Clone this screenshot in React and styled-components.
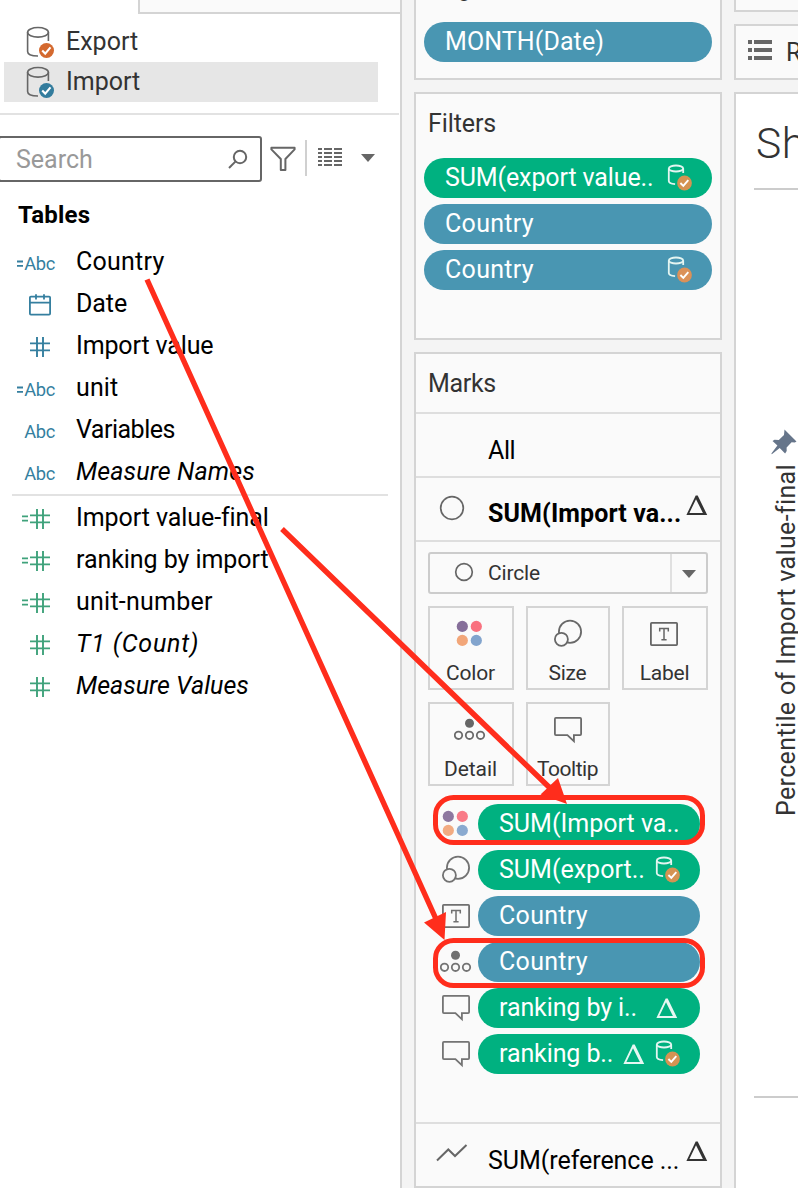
import React from 'react';
import styled, { createGlobalStyle } from 'styled-components';

const GlobalStyle = createGlobalStyle`
  * { box-sizing: border-box; }
  body { margin: 0; background: #fff; font-family: Roboto, "Liberation Sans", sans-serif; }
  svg { display: block; flex: none; }
`;

const Page = styled.div`
  position: relative;
  display: flex;
  width: 798px;
  height: 1188px;
  overflow: hidden;
  background: #f4f4f4;
  color: #333;
  font-size: 25px;
`;

const Txt = styled.span`
  display: block;
  padding-top: ${p => p.$drop || 0}px;
  padding-bottom: ${p => p.$lift || 0}px;
  white-space: pre;
  line-height: 40px;
  letter-spacing: ${p => p.$ls || 0}px;
`;

/* ---------- data pane ---------- */
const DataPane = styled.aside`
  width: 402px;
  flex: none;
  background: #fff;
  border-right: 2px solid #d4d4d4;
`;
const TabEdge = styled.div`
  height: 14px;
  margin-left: 138px;
  background: #fafafa;
  border-left: 2px solid #d4d4d4;
  border-bottom: 2px solid #d4d4d4;
`;
const Sources = styled.div`
  padding: 8px 22px 11px 4px;
`;
const Source = styled.div`
  display: flex;
  align-items: center;
  gap: 12px;
  height: 40px;
  padding-left: 22px;
  background: ${p => (p.$active ? '#e6e6e6' : 'transparent')};
`;
const Rule = styled.div`
  height: 2px;
  margin: 0 ${p => p.$right || 0}px ${p => p.$bottom || 0}px ${p => p.$left || 0}px;
  background: #e2e2e2;
`;
const SearchRow = styled.div`
  display: flex;
  align-items: center;
  height: 46px;
  margin-top: 21px;
`;
const SearchBox = styled.div`
  display: flex;
  align-items: center;
  justify-content: space-between;
  width: 264px;
  height: 46px;
  margin-left: -2px;
  padding: 0 12px 0 16px;
  border: 2px solid #666;
  border-radius: 3px;
  color: #999;
`;
const Tools = styled.div`
  display: flex;
  align-items: center;
  padding-left: 8px;
  height: 42px;
  margin-top: -2px;
`;
const FunnelSlot = styled.div`
  padding-top: 2px;
`;
const ColumnsSlot = styled.div`
  padding-bottom: 2px;
`;
const Divider = styled.div`
  width: 2px;
  height: 36px;
  margin: 0 11px 0 9px;
  background: #d0d0d0;
`;
const CaretSlot = styled.div`
  padding: 0 0 1px 19px;
`;
const Heading = styled.h2`
  margin: 13px 0 7px 18px;
  font-size: 24px;
  line-height: 40px;
  font-weight: 700;
  color: #000;
  letter-spacing: 0.2px;
`;
const Field = styled.div`
  display: flex;
  align-items: center;
  height: 42px;
  color: #000;
  font-style: ${p => (p.$italic ? 'italic' : 'normal')};
`;
const FieldIcon = styled.div`
  width: 56px;
  margin-right: 20px;
  padding-right: ${p => (p.$text ? 1 : 4)}px;
  padding-top: ${p => (p.$text ? 2 : 0)}px;
  display: flex;
  justify-content: flex-end;
  align-items: center;
  color: ${p => (p.$measure ? '#3fa27b' : '#357f9f')};
`;
const Abc = styled.span`
  margin-left: 1px;
  font-size: 18.3px;
  font-style: normal;
  line-height: 24px;
  letter-spacing: -0.35px;
`;

/* ---------- shelves ---------- */
const Shelves = styled.section`
  display: flex;
  flex-direction: column;
  gap: 12px;
  width: 308px;
  margin-left: 12px;
  flex: none;
`;
const Card = styled.div`
  height: ${p => p.$h}px;
  flex: none;
  background: #fafafa;
  border: 2px solid #d4d4d4;
  border-top-width: ${p => (p.$open ? 0 : 2)}px;
`;
const CardTitle = styled.div`
  height: ${p => p.$h}px;
  padding: 10px 12px 0;
`;
const CutTitle = styled.div`
  height: 22px;
  padding-left: 12px;
  overflow: hidden;
`;
const CutText = styled.div`
  margin-top: -27px;
  line-height: 30px;
`;
const Pills = styled.div`
  display: flex;
  flex-direction: column;
  gap: 6px;
  padding: 0 8px;
`;
const Pill = styled.div`
  display: flex;
  align-items: center;
  flex: 1;
  height: 40px;
  min-height: 40px;
  padding: 0 ${p => p.$pr || 19}px 0 21px;
  border-radius: 20px;
  background: ${p => (p.$green ? '#00b180' : '#4996b2')};
  color: #fff;
`;
const PillIcons = styled.div`
  display: flex;
  align-items: center;
  gap: 10px;
  margin-left: auto;
`;
const Layer = styled.div`
  display: flex;
  height: 64px;
  border-top: 2px solid #dedede;
  color: #000;
  font-weight: ${p => (p.$bold ? 700 : 400)};
`;
const LayerIcon = styled.div`
  width: 72px;
  padding: ${p => p.$top || 17}px 0 0 ${p => p.$left || 23}px;
  flex: none;
`;
const LayerName = styled.div`
  width: 198px;
  padding-top: 16px;
  flex: none;
  white-space: nowrap;
`;
const LayerMark = styled.div`
  padding-top: 17px;
`;
const Encodings = styled.div`
  height: 582px;
  border-top: 2px solid #dedede;
  padding: 10px 12px 0;
`;
const Select = styled.div`
  display: flex;
  align-items: center;
  gap: 14px;
  height: 42px;
  border: 2px solid #ccc;
  border-radius: 3px;
  padding-left: 24px;
  font-size: 21px;
`;
const SelectIcon = styled.div`
  padding-bottom: 2px;
`;
const SelectArrow = styled.div`
  display: flex;
  align-items: center;
  justify-content: center;
  width: 36px;
  height: 38px;
  padding-top: 2px;
  margin-left: auto;
  border-left: 2px solid #e0e0e0;
`;
const Buttons = styled.div`
  display: grid;
  grid-template-columns: 86px 84px 86px;
  grid-auto-rows: 84px;
  gap: 12px;
  margin-top: 12px;
`;
const MarkButton = styled.div`
  display: flex;
  flex-direction: column;
  align-items: center;
  border: 2px solid #d4d4d4;
  padding-top: 10px;
  font-size: 21px;
  color: #333;
  &:not(:nth-child(3n + 2)) > svg { transform: translateX(-1px); }
`;
const ButtonLabel = styled.span`
  margin: 10px 1px 0 0;
  line-height: 30px;
  letter-spacing: ${p => p.$ls || 0}px;
`;
const Assigned = styled.div`
  display: flex;
  flex-direction: column;
  gap: 6px;
  margin: 18px 8px 0 13px;
`;
const AssignedRow = styled.div`
  display: flex;
  align-items: center;
  gap: 7px;
`;
const AssignedIcon = styled.div`
  display: flex;
  justify-content: center;
  width: 30px;
  flex: none;
  padding-bottom: 2px;
  opacity: 0.93;
`;

/* ---------- view ---------- */
const View = styled.section`
  display: flex;
  flex-direction: column;
  gap: 12px;
  margin-left: 12px;
  width: 100px;
  flex: none;
`;
const Shelf = styled.div`
  display: flex;
  align-items: center;
  gap: 14px;
  height: ${p => p.$h}px;
  padding-left: 12px;
  background: #fafafa;
  border: 2px solid #d4d4d4;
  border-top-width: ${p => (p.$open ? 0 : 2)}px;
`;
const ShelfIcon = styled.div`
  padding-bottom: 4px;
`;
const Sheet = styled.div`
  height: 1100px;
  background: #fff;
  border: 2px solid #d4d4d4;
  border-bottom: 0;
  padding-left: 18px;
`;
const SheetTitle = styled.div`
  height: 96px;
  padding: 24px 0 0 2px;
  border-bottom: 2px solid #ccc;
  font-size: 42.5px;
  line-height: 52px;
  font-weight: 300;
  letter-spacing: 0.6px;
`;
const Axis = styled.div`
  height: 908px;
  border-bottom: 2px solid #ccc;
  padding: 239px 0 0 17px;
`;
const AxisTitle = styled.div`
  margin-top: 9px;
  margin-left: 1px;
  width: 30px;
  writing-mode: vertical-rl;
  transform: rotate(180deg);
  line-height: 30px;
  white-space: nowrap;
  letter-spacing: 0.36px;
`;

const Annotation = styled.svg`
  position: absolute;
  left: 0;
  top: 0;
  pointer-events: none;
`;

/* ---------- icons ---------- */
const Database = ({ badge }) => (
  <svg width="28" height="32" viewBox="0 0 28 32" fill="none">
    <g stroke="#666" strokeWidth="1.6">
      <ellipse cx="12" cy="6.3" rx="10.4" ry="4.8" />
      <path d="M1.6 6.3V25.5C1.6 28.5 6 30 12 30M22.4 6.3V15" />
    </g>
    <circle cx="20.5" cy="24.5" r="7.5" fill={badge} />
    <path d="M16.2 24.6l3 3 5.3-6.2" stroke="#fff" strokeWidth="2.1" />
  </svg>
);
const PillDatabase = ({ badge = '#d49352' }) => (
  <svg width="26" height="28" viewBox="0 0 26 28" fill="none">
    <g stroke="#e4f5f1" strokeWidth="1.8">
      <ellipse cx="9" cy="4.5" rx="7.2" ry="3" />
      <path d="M1.8 4.5V17c0 2 2.6 2.9 6.3 3.1M16.2 4.5V9" />
    </g>
    <circle cx="17.5" cy="19" r="7.4" fill={badge} />
    <path d="M13.4 19l2.9 2.9 5-5.8" stroke="#fff" strokeWidth="1.9" />
  </svg>
);
const Delta = ({ color = '#e6f7f2' }) => (
  <svg width="22" height="21" viewBox="0 0 22 21">
    <path fillRule="evenodd" fill={color} d="M9.700 0.500h2L21.200 20H0.400zM10 4.200L3.400 17.900h13.500z" />
  </svg>
);
const Hash = ({ calc }) => (
  <svg width={calc ? 30 : 22} height="22" viewBox={calc ? '-8 0 30 22' : '0 0 22 22'} fill="none" stroke="currentColor" strokeWidth="1.9">
    <path d="M0 7.400h20M0 14.400h20M7 1v20M13 1v20" />
    {calc && <path d="M-8 8.400h6M-8 12.600h6" strokeWidth="1.7" />}
  </svg>
);
const Equals = () => (
  <svg width="6" height="22" viewBox="0 0 6 22" fill="none" stroke="currentColor" strokeWidth="1.8">
    <path d="M0 8.500h6M0 12.800h6" />
  </svg>
);
const Calendar = () => (
  <svg width="23" height="23" viewBox="0 0 23 23" fill="none" stroke="currentColor" strokeWidth="1.8">
    <rect x="0.9" y="2.6" width="20.2" height="18" rx="1" />
    <path d="M1 8.600h20M7 0.300V5.600M15 0.300V5.600" />
  </svg>
);
const Magnifier = () => (
  <svg width="20" height="20" viewBox="0 0 20 20" fill="none" stroke="#666" strokeWidth="2">
    <circle cx="12" cy="8" r="6.2" />
    <path d="M7.6 12.4L1 19" />
  </svg>
);
const Funnel = () => (
  <svg width="26" height="26" viewBox="0 0 26 26" fill="none" stroke="#666" strokeWidth="2" strokeLinejoin="round">
    <path d="M1.4 1.8h23.2v1.6L15.4 13v11h-4.6V13L1.4 3.4z" />
  </svg>
);
const Columns = () => (
  <svg width="24" height="18" viewBox="0 0 24 18" fill="#666">
    {[0, 4, 8, 12, 16].map(y => (
      <path key={y} d={`M0 ${y}h4v2H0zM6 ${y}h8v2H6zM16 ${y}h8v2h-8z`} />
    ))}
  </svg>
);
const Caret = () => (
  <svg width="14" height="8" viewBox="0 0 14 8"><path d="M0 0h14L7 8z" fill="#666" /></svg>
);
const Ring = ({ size }) => (
  <svg width={size} height={size} viewBox={`0 0 ${size} ${size}`} fill="none">
    <circle cx={size / 2} cy={size / 2} r={size / 2 - 1.7} stroke="#666" strokeWidth="1.7" />
  </svg>
);
const ColorIcon = () => (
  <svg width="30" height="30" viewBox="0 0 30 30">
    <circle cx="7.3" cy="8.4" r="5.6" fill="#856e99" />
    <circle cx="21.3" cy="8.4" r="5.6" fill="#f9717f" />
    <circle cx="7.3" cy="22.4" r="5.6" fill="#f2a679" />
    <circle cx="21.3" cy="22.4" r="5.6" fill="#82a4cd" />
  </svg>
);
const SizeIcon = () => (
  <svg width="30" height="30" viewBox="0 0 30 30" fill="none" stroke="#686868" strokeWidth="1.8">
    <circle cx="17" cy="13.7" r="11.1" />
    <circle cx="8.4" cy="21.3" r="6.5" fill="#fafafa" />
  </svg>
);
const LabelIcon = () => (
  <svg width="30" height="30" viewBox="0 0 30 30" fill="none" stroke="#666" strokeWidth="1.8">
    <rect x="1.9" y="4.9" width="26.2" height="22.2" rx="0.8" />
    <path d="M10.700 13.500v-3h8.600v3M15 10.500v11M12.400 21.800h5.200" strokeWidth="1.5" />
  </svg>
);
const DetailIcon = () => (
  <svg width="32" height="30" viewBox="0 0 32 30" fill="none" stroke="#6a6a6a" strokeWidth="1.8">
    <circle cx="15.500" cy="9.300" r="4.500" fill="#666" stroke="none" />
    <circle cx="4.500" cy="21.300" r="3.700" />
    <circle cx="15.500" cy="21.300" r="3.700" />
    <circle cx="26.500" cy="21.300" r="3.700" />
  </svg>
);
const TooltipIcon = () => (
  <svg width="30" height="30" viewBox="0 0 30 30" fill="none" stroke="#6a6a6a" strokeWidth="1.8">
    <path d="M2.900 3.900h24.200q1 0 1 1v15.200q0 1-1 1H20.900v6.100L14.400 21.100H2.900q-1 0-1-1V4.900q0-1 1-1z" />
  </svg>
);
const LineIcon = () => (
  <svg width="32" height="20" viewBox="0 0 32 20" fill="none" stroke="#666" strokeWidth="2">
    <path d="M1 18.500L12.300 7.500l6.700 6.500L30.500 3" />
  </svg>
);
const ListIcon = () => (
  <svg width="24" height="20" viewBox="0 0 24 20" fill="#666">
    <path d="M0 0h4v4H0zM6 0h18v4H6zM0 8h4v4H0zM6 8h18v4H6zM0 16h4v4H0zM6 16h18v4H6z" />
  </svg>
);
const Pin = () => (
  <svg width="26" height="26" viewBox="0 0 26 26" fill="#66758a">
    <path d="M13.5 0.5L25.5 12.4l-1.7 1.1-3.2-0.2-5 5.2 0.1 3.6-1.6 2.3-5.4-5.3L0.8 25.2 0.4 24.6 6.4 16.6 1.5 12l2-1.2 4.3 0.3L13 6z" />
  </svg>
);

const fields = [
  { name: 'Country', icon: '=Abc', ls: 0.25 },
  { name: 'Date', icon: 'date', ls: -0.1 },
  { name: 'Import value', icon: '#', ls: -0.14 },
  { name: 'unit', icon: '=Abc', ls: 0.1 },
  { name: 'Variables', icon: 'Abc', ls: -0.5 },
  { name: 'Measure Names', icon: 'Abc', italic: true, ls: 0.12 },
];
const measures = [
  { name: 'Import value-final', icon: '=#', ls: -0.08 },
  { name: 'ranking by import', icon: '=#', ls: -0.06 },
  { name: 'unit-number', icon: '=#', ls: 0.25 },
  { name: 'T1 (Count)', icon: '#', italic: true, ls: 0.8 },
  { name: 'Measure Values', icon: '#', italic: true, ls: 0 },
];

const FieldRow = ({ name, icon, italic, ls, measure }) => (
  <Field $italic={italic}>
    <FieldIcon $measure={measure} $text={icon.includes('Abc')}>
      {icon === 'date' && <Calendar />}
      {icon.includes('#') && <Hash calc={icon[0] === '='} />}
      {icon === '=Abc' && <Equals />}
      {icon.includes('Abc') && <Abc>Abc</Abc>}
    </FieldIcon>
    <Txt $ls={ls} $lift={2}>{name}</Txt>
  </Field>
);

const assigned = [
  { Icon: ColorIcon, text: 'SUM(Import va..', green: true },
  { Icon: SizeIcon, text: 'SUM(export..', green: true, db: true },
  { Icon: LabelIcon, text: 'Country', ls: 0.3 },
  { Icon: DetailIcon, text: 'Country', ls: 0.3 },
  { Icon: TooltipIcon, text: 'ranking by i..', green: true, delta: true, pr: 22, ls: -0.1 },
  { Icon: TooltipIcon, text: 'ranking b..', green: true, delta: true, db: true, ls: -0.1 },
];

const buttons = [
  { Icon: ColorIcon, text: 'Color', ls: -0.15 },
  { Icon: SizeIcon, text: 'Size', ls: -0.3 },
  { Icon: LabelIcon, text: 'Label', ls: -0.25 },
  { Icon: DetailIcon, text: 'Detail', ls: -0.1 },
  { Icon: TooltipIcon, text: 'Tooltip', ls: -0.5 },
];

export default function App() {
  return (
    <Page>
      <GlobalStyle />
      <DataPane>
        <TabEdge />
        <Sources>
          <Source><Database badge="#d4692f" /><Txt>Export</Txt></Source>
          <Source $active><Database badge="#337c9d" /><Txt>Import</Txt></Source>
        </Sources>
        <Rule $right={1} />
        <SearchRow>
          <SearchBox><Txt $drop={2}>Search</Txt><Magnifier /></SearchBox>
          <Tools>
            <FunnelSlot><Funnel /></FunnelSlot>
            <Divider />
            <ColumnsSlot><Columns /></ColumnsSlot>
            <CaretSlot><Caret /></CaretSlot>
          </Tools>
        </SearchRow>
        <Heading>Tables</Heading>
        {fields.map(f => <FieldRow key={f.name} {...f} />)}
        <Rule $left={12} $right={12} $bottom={2} />
        {measures.map(f => <FieldRow key={f.name} measure {...f} />)}
      </DataPane>

      <Shelves>
        <Card $h={80} $open>
          <CutTitle><CutText>Pages</CutText></CutTitle>
          <Pills><Pill><Txt $ls={0.1}>MONTH(Date)</Txt></Pill></Pills>
        </Card>
        <Card $h={248}>
          <CardTitle $h={64}><Txt $ls={-0.1}>Filters</Txt></CardTitle>
          <Pills>
            <Pill $green><Txt $ls={-0.12}>SUM(export value..</Txt><PillIcons><PillDatabase /></PillIcons></Pill>
            <Pill><Txt $ls={0.3}>Country</Txt></Pill>
            <Pill><Txt $ls={0.3}>Country</Txt><PillIcons><PillDatabase badge="#db9159" /></PillIcons></Pill>
          </Pills>
        </Card>
        <Card $h={836}>
          <CardTitle $h={58}><Txt $ls={-0.3}>Marks</Txt></CardTitle>
          <Layer><LayerIcon /><LayerName><Txt $drop={1} $ls={-0.4}>All</Txt></LayerName></Layer>
          <Layer $bold>
            <LayerIcon><Ring size={26} /></LayerIcon>
            <LayerName><Txt $ls={0.1}>SUM(Import va...</Txt></LayerName>
            <LayerMark><Delta color="#333" /></LayerMark>
          </Layer>
          <Encodings>
            <Select>
              <SelectIcon><Ring size={20} /></SelectIcon>
              <Txt $ls={-0.15}>Circle</Txt>
              <SelectArrow><Caret /></SelectArrow>
            </Select>
            <Buttons>
              {buttons.map(({ Icon, text, ls }) => (
                <MarkButton key={text}><Icon /><ButtonLabel $ls={ls}>{text}</ButtonLabel></MarkButton>
              ))}
            </Buttons>
            <Assigned>
              {assigned.map(({ Icon, text, green, db, delta, ls, pr }, i) => (
                <AssignedRow key={i}>
                  <AssignedIcon><Icon /></AssignedIcon>
                  <Pill $green={green} $pr={pr}>
                    <Txt $ls={ls}>{text}</Txt>
                    <PillIcons>{delta && <Delta />}{db && <PillDatabase />}</PillIcons>
                  </Pill>
                </AssignedRow>
              ))}
            </Assigned>
          </Encodings>
          <Layer>
            <LayerIcon $left={20} $top={18}><LineIcon /></LayerIcon>
            <LayerName><Txt $drop={1} $ls={-0.05}>SUM(reference ...</Txt></LayerName>
            <LayerMark><Delta color="#333" /></LayerMark>
          </Layer>
        </Card>
      </Shelves>

      <View>
        <Shelf $h={12} $open />
        <Shelf $h={56}><ShelfIcon><ListIcon /></ShelfIcon><Txt $drop={2}>Rows</Txt></Shelf>
        <Sheet>
          <SheetTitle>Sheet</SheetTitle>
          <Axis>
            <Pin />
            <AxisTitle>Percentile of Import value-final</AxisTitle>
          </Axis>
        </Sheet>
      </View>

      <Annotation width="798" height="1188" viewBox="0 0 798 1188" fill="none" stroke="#ff2d1c" strokeWidth="5">
        <rect x="435.5" y="797.5" width="267" height="45" rx="18" />
        <rect x="435.5" y="940.5" width="267" height="45" rx="18" />
        <path d="M147 279.500L436 919M282 529L551 789" strokeWidth="5.4" />
        <path d="M444.500 940L424 922.500L446 912zM567 804L540.500 794.500L558 778z" fill="#ff2d1c" stroke="none" />
      </Annotation>
    </Page>
  );
}
